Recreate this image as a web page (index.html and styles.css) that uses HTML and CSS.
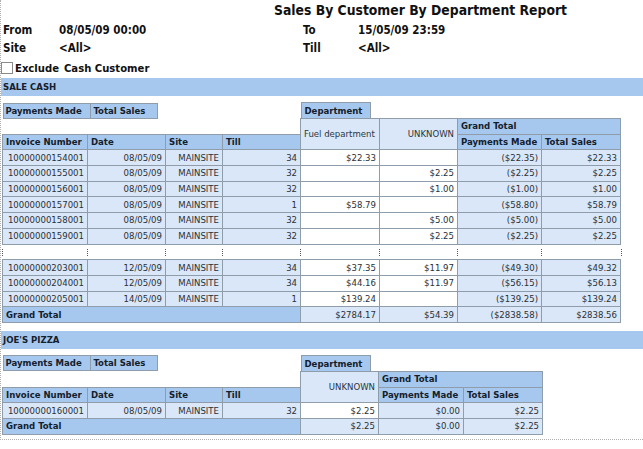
FILE: index.html
```html
<!DOCTYPE html>
<html>
<head>
<meta charset="utf-8">
<link rel="stylesheet" href="styles.css">
</head>
<body>
<div class="report">
  <div class="title">Sales By Customer By Department Report</div>
  <div class="params">
    <span>From</span><span>08/05/09 00:00</span><span>To</span><span>15/05/09 23:59</span>
    <span>Site</span><span>&lt;All&gt;</span><span>Till</span><span>&lt;All&gt;</span>
  </div>
  <div class="exclude"><span class="cb"></span><span>Exclude</span><span>Cash Customer</span></div>

  <div class="band">SALE CASH</div>
  <table class="matrix m1">
    <colgroup>
      <col class="c-inv"><col class="c-date"><col class="c-site"><col class="c-till">
      <col class="c-fuel"><col class="c-unk"><col class="c-pm"><col class="c-ts">
    </colgroup>
    <tr class="top">
      <td colspan="4" class="blank"><div class="pmts"><span class="pm">Payments Made</span><span class="ts">Total Sales</span></div></td>
      <td colspan="4" class="blank"><div class="dept">Department</div></td>
    </tr>
    <tr class="row">
      <td colspan="4" class="blank"></td>
      <td rowspan="2" class="dh">Fuel department</td>
      <td rowspan="2" class="dh r">UNKNOWN</td>
      <td colspan="2" class="h">Grand Total</td>
    </tr>
    <tr class="row">
      <td class="h">Invoice Number</td><td class="h">Date</td><td class="h">Site</td><td class="h">Till</td>
      <td class="h">Payments Made</td><td class="h">Total Sales</td>
    </tr>
    <tr class="row">
      <td class="l">10000000154001</td><td class="l">08/05/09</td><td class="l">MAINSITE</td><td class="l">34</td>
      <td class="w">$22.33</td><td class="w"></td><td class="l">($22.35)</td><td class="l">$22.33</td>
    </tr>
    <tr class="row">
      <td class="l">10000000155001</td><td class="l">08/05/09</td><td class="l">MAINSITE</td><td class="l">32</td>
      <td class="w"></td><td class="w">$2.25</td><td class="l">($2.25)</td><td class="l">$2.25</td>
    </tr>
    <tr class="row">
      <td class="l">10000000156001</td><td class="l">08/05/09</td><td class="l">MAINSITE</td><td class="l">32</td>
      <td class="w"></td><td class="w">$1.00</td><td class="l">($1.00)</td><td class="l">$1.00</td>
    </tr>
    <tr class="row">
      <td class="l">10000000157001</td><td class="l">08/05/09</td><td class="l">MAINSITE</td><td class="l">1</td>
      <td class="w">$58.79</td><td class="w"></td><td class="l">($58.80)</td><td class="l">$58.79</td>
    </tr>
    <tr class="row">
      <td class="l">10000000158001</td><td class="l">08/05/09</td><td class="l">MAINSITE</td><td class="l">32</td>
      <td class="w"></td><td class="w">$5.00</td><td class="l">($5.00)</td><td class="l">$5.00</td>
    </tr>
    <tr class="row">
      <td class="l">10000000159001</td><td class="l">08/05/09</td><td class="l">MAINSITE</td><td class="l">32</td>
      <td class="w"></td><td class="w">$2.25</td><td class="l">($2.25)</td><td class="l">$2.25</td>
    </tr>
    <tr class="row gap">
      <td></td><td></td><td></td><td></td><td></td><td></td><td></td><td class="last"></td>
    </tr>
    <tr class="row">
      <td class="l">10000000203001</td><td class="l">12/05/09</td><td class="l">MAINSITE</td><td class="l">34</td>
      <td class="w">$37.35</td><td class="w">$11.97</td><td class="l">($49.30)</td><td class="l">$49.32</td>
    </tr>
    <tr class="row">
      <td class="l">10000000204001</td><td class="l">12/05/09</td><td class="l">MAINSITE</td><td class="l">34</td>
      <td class="w">$44.16</td><td class="w">$11.97</td><td class="l">($56.15)</td><td class="l">$56.13</td>
    </tr>
    <tr class="row">
      <td class="l">10000000205001</td><td class="l">14/05/09</td><td class="l">MAINSITE</td><td class="l">1</td>
      <td class="w">$139.24</td><td class="w"></td><td class="l">($139.25)</td><td class="l">$139.24</td>
    </tr>
    <tr class="row">
      <td colspan="4" class="h">Grand Total</td>
      <td class="l">$2784.17</td><td class="l">$54.39</td><td class="l">($2838.58)</td><td class="l">$2838.56</td>
    </tr>
  </table>

  <div class="band band2">JOE'S PIZZA</div>
  <table class="matrix m2">
    <colgroup>
      <col class="c-inv"><col class="c-date"><col class="c-site"><col class="c-till">
      <col class="c-unk2"><col class="c-pm2"><col class="c-ts">
    </colgroup>
    <tr class="top">
      <td colspan="4" class="blank"><div class="pmts"><span class="pm">Payments Made</span><span class="ts">Total Sales</span></div></td>
      <td colspan="3" class="blank"><div class="dept">Department</div></td>
    </tr>
    <tr class="row">
      <td colspan="4" class="blank"></td>
      <td rowspan="2" class="dh r">UNKNOWN</td>
      <td colspan="2" class="h">Grand Total</td>
    </tr>
    <tr class="row">
      <td class="h">Invoice Number</td><td class="h">Date</td><td class="h">Site</td><td class="h">Till</td>
      <td class="h">Payments Made</td><td class="h">Total Sales</td>
    </tr>
    <tr class="row">
      <td class="l">10000000160001</td><td class="l">08/05/09</td><td class="l">MAINSITE</td><td class="l">32</td>
      <td class="w">$2.25</td><td class="l">$0.00</td><td class="l">$2.25</td>
    </tr>
    <tr class="row">
      <td colspan="4" class="h">Grand Total</td>
      <td class="l">$2.25</td><td class="l">$0.00</td><td class="l">$2.25</td>
    </tr>
  </table>
</div>
</body>
</html>
```

FILE: styles.css
```css
html, body {
  margin: 0;
  padding: 0;
  background: #fff;
}
body {
  font-family: "DejaVu Sans Condensed", "DejaVu Sans", sans-serif;
  color: #1c2630;
}
.report {
  width: 643px;
  box-sizing: border-box;
  border-left: 1px dotted #b0b0b0;
  border-bottom: 1px dotted #b0b0b0;
  padding-bottom: 4px;
}
.title {
  margin-left: 273px;
  font-weight: bold;
  font-size: 13.8px;
  line-height: 20px;
  height: 20px;
  color: #111;
}
.params {
  margin-top: 1px;
  display: grid;
  grid-template-columns: 56px 244px 55px auto;
  grid-auto-rows: 18px;
  align-items: center;
  padding-left: 2px;
  font-weight: bold;
  font-size: 11.5px;
  color: #111;
}
.exclude {
  margin-top: 2px;
  height: 18px;
  display: flex;
  align-items: center;
  gap: 5px;
  font-weight: bold;
  font-size: 11.2px;
  color: #111;
}
.exclude .cb {
  width: 10px;
  height: 10px;
  border: 1px solid #8a8a8a;
  background: #fff;
  margin-right: -3px;
}
.band {
  margin-top: 1px;
  height: 18px;
  line-height: 18px;
  background: #a6c8ee;
  font-weight: bold;
  font-size: 9.5px;
  padding-left: 2px;
  color: #15202b;
}
.band2 {
  margin-top: 8px;
}
.matrix {
  margin-top: 6px;
  margin-left: 1px;
  border-collapse: collapse;
  table-layout: fixed;
  font-size: 9.5px;
}
.m1 { width: 618px; }
.m2 { width: 540px; }
.c-inv { width: 85px; }
.c-date { width: 78px; }
.c-site { width: 57px; }
.c-till { width: 78px; }
.c-fuel { width: 79px; }
.c-unk { width: 78px; }
.c-pm { width: 84px; }
.c-ts { width: 79px; }
.c-unk2 { width: 78px; }
.c-pm2 { width: 85px; }

.matrix td {
  padding: 0 3px;
  line-height: 12px;
  vertical-align: middle;
  border: 1px solid #8f9caa;
  white-space: nowrap;
  overflow: hidden;
}
.matrix tr.top td {
  height: 16px;
  padding: 0;
  border: none;
  vertical-align: bottom;
}
.matrix tr.row { height: 15.7px; }
.matrix td.blank {
  border: none;
  background: #fff;
}
.matrix td.h {
  background: #a6c8ee;
  font-weight: bold;
  text-align: left;
  color: #14202c;
}
.matrix td.dh {
  background: #d9e7f8;
  color: #2a3642;
  text-align: left;
}
.matrix td.r { text-align: right; }
.matrix td.l {
  background: #d9e7f8;
  text-align: right;
  color: #2a3036;
}
.matrix td.w {
  background: #fff;
  text-align: right;
  color: #2a3036;
}
.pmts {
  display: flex;
  height: 16px;
  box-sizing: border-box;
}
.pmts span {
  box-sizing: border-box;
  height: 16px;
  line-height: 14px;
  padding-left: 2px;
  background: #a6c8ee;
  border: 1px solid #8f9caa;
  font-weight: bold;
  color: #14202c;
}
.pmts .pm { width: 88px; }
.pmts .ts { width: 67px; border-left: none; padding-left: 3px; }
.dept {
  box-sizing: border-box;
  width: 70px;
  height: 16px;
  line-height: 15px;
  padding-left: 3px;
  background: #a6c8ee;
  border: 1px solid #8f9caa;
  border-bottom: none;
  font-weight: bold;
  color: #14202c;
}
.matrix tr.gap td {
  position: relative;
  overflow: visible;
  border-left: none;
  border-right: none;
  background: #fff;
}
.matrix tr.gap td::before {
  content: "";
  position: absolute;
  left: -1px;
  top: 4px;
  height: 7px;
  border-left: 1px dotted #555;
}
.matrix tr.gap td.last::after {
  content: "";
  position: absolute;
  right: -1px;
  top: 4px;
  height: 7px;
  border-left: 1px dotted #555;
}
```
